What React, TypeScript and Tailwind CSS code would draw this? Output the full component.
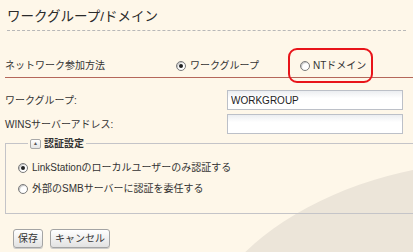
import React from 'react';

const Radio = ({ checked }: { checked?: boolean }) => (
  <span className="inline-flex h-[10px] w-[10px] items-center justify-center rounded-full border border-[#7a7a7a] bg-white shadow-[inset_1px_1px_1px_rgba(0,0,0,0.25)]">
    {checked && <span className="h-[4px] w-[4px] rounded-full bg-[#222]" />}
  </span>
);

export default function App() {
  return (
    <div className="relative h-[252px] w-[413px] overflow-hidden bg-[#fef7e9] text-[#333] [font-family:'Liberation_Sans','Noto_Sans_CJK_JP',sans-serif]">
      {/* background swoosh */}
      <div className="absolute left-[190px] top-[160px] h-[420px] w-[640px] rounded-[50%] bg-[#ece5d9]" />

      <div className="relative">
        <div className="px-[7px] pt-[8px]">
          <h1 className="text-[13.5px] leading-[18px] font-normal text-[#2a2a2a]">ワークグループ/ドメイン</h1>
          <div className="mt-[4px] border-b border-dashed border-[#b8b8b8]" />
        </div>

        <div className="relative mt-[25px] ml-[5px] flex h-[22px] items-center border-b border-[#b5675a] text-[10px] pb-[2px]">
          <span className="w-[171px]">ネットワーク参加方法</span>
          <label className="flex items-center gap-[4px]">
            <Radio checked />
            <span>ワークグループ</span>
          </label>
          <label className="ml-[41px] flex items-center gap-[3px]">
            <Radio />
            <span>NTドメイン</span>
          </label>
          <div className="absolute left-[283px] top-[-8px] h-[35px] w-[85px] rounded-[9px] border-[2px] border-[#e8141a]" />
        </div>

        <div className="mt-[12px] ml-[5px] flex flex-col gap-[4px] pr-[10px] text-[10px]">
          <div className="flex items-center justify-between">
            <span>ワークグループ:</span>
            <input
              readOnly
              value="WORKGROUP"
              className="h-[20px] w-[176px] border border-[#bcc0c8] bg-gradient-to-b from-[#eceef1] to-white to-40% px-[3px] text-[10px] text-[#222] outline-none"
            />
          </div>
          <div className="flex items-center justify-between">
            <span>WINSサーバーアドレス:</span>
            <input
              readOnly
              value=""
              className="h-[20px] w-[176px] border border-[#bcc0c8] bg-gradient-to-b from-[#eceef1] to-white to-40% px-[3px] text-[10px] outline-none"
            />
          </div>
        </div>

        <fieldset className="mt-[2px] ml-[5px] border border-r-0 border-[#c4c4c8] pb-[17px] pl-[12px] text-[10px]">
          <legend className="ml-[10px] flex items-center gap-[3px] px-[2px]">
            <span className="flex h-[10px] w-[11px] items-center justify-center rounded-[2px] border border-[#a8a8a8] bg-gradient-to-b from-white to-[#e4e4e4] text-[5px] text-[#555]">▲</span>
            <span className="font-bold text-[10px] text-[#333]">認証設定</span>
          </legend>
          <label className="mt-[9px] flex items-center gap-[4px]">
            <Radio checked />
            <span>LinkStationのローカルユーザーのみ認証する</span>
          </label>
          <label className="mt-[6px] flex items-center gap-[4px]">
            <Radio />
            <span>外部のSMBサーバーに認証を委任する</span>
          </label>
        </fieldset>

        <div className="mt-[15px] ml-[13px] flex gap-[7px] text-[10px]">
          <button className="h-[19px] rounded-[3px] border border-[#a4a4a4] bg-gradient-to-b from-white to-[#e2e2e2] px-[4px] shadow-[0_1px_0_#ccc]">保存</button>
          <button className="h-[19px] rounded-[3px] border border-[#a4a4a4] bg-gradient-to-b from-white to-[#e2e2e2] px-[4px] shadow-[0_1px_0_#ccc]">キャンセル</button>
        </div>
      </div>
    </div>
  );
}
